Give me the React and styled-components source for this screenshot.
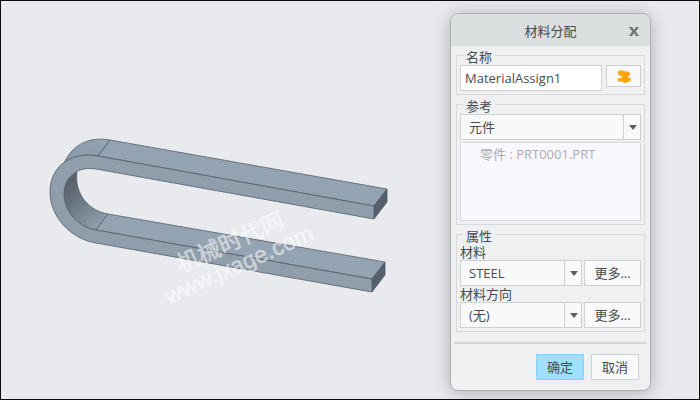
import React, { useState } from 'react';
import styled, { createGlobalStyle } from 'styled-components';

const MaterialPicker = ({ id, label, options }) => {
  return (
    <>
      <FieldLabel htmlFor={id}>{label}</FieldLabel>
      <PickerRow>
        <Dropdown id={id} options={options} />
        <Button type="button">更多...</Button>
      </PickerRow>
    </>
  );
};

const Dropdown = ({ id, label, options }) => {
  return (
    <SelectWrapper>
      <Select id={id} aria-label={label}>
        {options.map((option) => (
          <option key={option}>{option}</option>
        ))}
      </Select>
      <Arrow aria-hidden="true">
        <svg width="8" height="5" viewBox="0 0 8 5">
          <path d="M0 0H8L4 5Z" fill="#5d6063" />
        </svg>
      </Arrow>
    </SelectWrapper>
  );
};

const Model = () => {
  return (
    <ModelView viewBox="1 1 449 398" role="img" aria-label="PRT0001">
      <defs>
        <linearGradient id="bend" x1="0" y1="1" x2="1" y2="0">
          <stop offset="0" stopColor="#8295a5" />
          <stop offset="1" stopColor="#96a4b2" />
        </linearGradient>
        <linearGradient id="inside" x1="0.2" y1="0" x2="0.8" y2="1">
          <stop offset="0" stopColor="#555e68" />
          <stop offset="0.35" stopColor="#66717d" />
          <stop offset="1" stopColor="#92a2b1" />
        </linearGradient>
      </defs>
      <g stroke="#535e69" strokeWidth="0.8" strokeLinejoin="round">
        {/* inner wall of the bend */}
        <path
          d="M77 172C69 176 64 184 64 194C64 211 78 227 96 230L108 214C90 211 74 195 77 172Z"
          fill="url(#inside)"
        />
        {/* top faces */}
        <path
          d="M62 168C70 146 87 136 110 140L98 156C83 153 70 158 62 168Z"
          fill="url(#bend)"
        />
        <path d="M110 140L387 189L374 206L98 156Z" fill="#94a3b2" />
        <path d="M108 214L385 262L372 279L96 230Z" fill="#94a3b2" />
        {/* cut ends */}
        <path d="M374 206L387 189V202L374 219Z" fill="#555e6a" />
        <path d="M372 279L385 262V275L372 292Z" fill="#555e6a" />
        {/* front face */}
        <path
          d="M374 206L98 156C70 151 50 167 50 192C50 217 71 239 96 243L372 292V279L96 230C78 227 64 211 64 194C64 176 78 166 96 169L374 219Z"
          fill="#909daa"
        />
      </g>
      <Watermark>
        <text transform="translate(181 273) rotate(-24)">机械时代网</text>
        <text transform="translate(169 304) rotate(-24)">www.jxage.com</text>
      </Watermark>
    </ModelView>
  );
};

const App = () => {
  const [name, setName] = useState('MaterialAssign1');

  return (
    <>
      <GlobalStyle />
      <Page>
        <Model />
        <Dialog role="dialog" aria-labelledby="dialog-title">
          <Header>
            <h1 id="dialog-title">材料分配</h1>
            <CloseButton type="button" aria-label="关闭">
              <svg width="10" height="9" viewBox="0 0 10 9">
                <path
                  d="M0 0H3L5 3L7 0H10L6.7 4.5L10 9H7L5 6L3 9H0L3.3 4.5Z"
                  fill="#6d7173"
                />
              </svg>
            </CloseButton>
          </Header>
          <Group>
            <legend>名称</legend>
            <NameRow>
              <NameInput
                aria-label="名称"
                value={name}
                onChange={(e) => setName(e.target.value)}
              />
              <ColorButton type="button" aria-label="颜色">
                <svg width="14" height="13" viewBox="0 0 14 13">
                  <path
                    d="M1 2C2 0 5 0 7 1C9 2 12 1 13 3C14 5 12 6 10 6.5C11 7.5 14 8 14 9.5C14 11 12 11 11 12C9 13.5 7 13 6 12C4 11.5 1 12 0.5 10C0.5 7.5 4 8.5 5.5 7C5 5 1 6 1 4Z"
                    fill="#ffa40f"
                  />
                </svg>
              </ColorButton>
            </NameRow>
          </Group>
          <Group>
            <legend>参考</legend>
            <Dropdown label="参考" options={['元件', '曲面', '曲线']} />
            <ReferenceList>
              <li>零件 : PRT0001.PRT</li>
            </ReferenceList>
          </Group>
          <Group>
            <legend>属性</legend>
            <MaterialPicker id="material" label="材料" options={['STEEL']} />
            <MaterialPicker id="direction" label="材料方向" options={['(无)']} />
          </Group>
          <Divider />
          <Footer>
            <Button type="button" $primary>
              确定
            </Button>
            <Button type="button">取消</Button>
          </Footer>
        </Dialog>
      </Page>
    </>
  );
};

export default App;

const GlobalStyle = createGlobalStyle`
  * {
    box-sizing: border-box;
  }

  body {
    margin: 0;
    color: #484b4e;
    font-family: 'Open Sans', 'Noto Sans CJK SC', sans-serif;
    font-size: 13px;
  }

  button,
  input,
  select {
    color: inherit;
    font: inherit;
  }
`;

const Page = styled.main`
  display: flex;
  align-items: flex-start;
  min-height: 100vh;
  padding-right: 48px;
  border: 1px solid #0d090d;
  background: #e8eaee;
`;

const ModelView = styled.svg`
  flex: 1;
  min-width: 0;
`;

const Watermark = styled.g`
  fill: #fff;
  fill-opacity: 0.5;
  stroke: #fff;
  stroke-opacity: 0.25;
  font-family: 'Liberation Sans', 'Noto Sans CJK SC', sans-serif;
  font-size: 23px;
`;

const Dialog = styled.section`
  flex: 0 0 201px;
  margin-top: 12px;
  padding-bottom: 10px;
  border: 1px solid #adb0b2;
  border-radius: 8px;
  background: #eef0f2;
  box-shadow: 0 2px 18px rgba(0, 0, 0, 0.25);
`;

const Header = styled.header`
  display: grid;
  grid-template-columns: 1fr auto 1fr;
  align-items: center;
  height: 32px;
  padding: 2px 8px 0;
  border-radius: 7px 7px 0 0;
  background: #dadedf;

  h1 {
    grid-column: 2;
    margin: 0;
    font-size: 13px;
    font-weight: 400;
    line-height: 16px;
  }
`;

const CloseButton = styled.button`
  display: grid;
  place-items: center;
  justify-self: end;
  width: 16px;
  height: 16px;
  padding: 0;
  border: 0;
  background: none;
`;

const Group = styled.fieldset`
  min-width: 0;
  margin: 0 5px;
  padding: 1px 3px 3px;
  border: 1px solid #d7dadd;

  legend {
    margin-left: 3px;
    padding: 4px 3px 0;
    line-height: 14px;
  }
`;

const NameRow = styled.div`
  display: grid;
  grid-template-columns: 1fr 35px;
  align-items: start;
  gap: 4px;
`;

const NameInput = styled.input`
  width: 100%;
  height: 26px;
  padding: 0 4px;
  border: 1px solid #cdd1d4;
  background: #fff;
`;

const Button = styled.button`
  height: 26px;
  padding: 0;
  border: 1px solid ${(props) => (props.$primary ? '#8bd4f8' : '#cdd1d4')};
  background: ${(props) => (props.$primary ? '#a0e0ff' : '#f9f9fa')};
  line-height: 16px;
`;

const ColorButton = styled(Button)`
  display: grid;
  place-items: center;
  height: 22px;
`;

const SelectWrapper = styled.div`
  display: grid;
`;

const Select = styled.select`
  grid-area: 1 / 1;
  width: 100%;
  height: 26px;
  padding: 0 24px 0 8px;
  border: 1px solid #cdd1d4;
  border-radius: 0;
  background: #f9f9fa;
  appearance: none;
`;

const Arrow = styled.span`
  display: grid;
  grid-area: 1 / 1;
  place-items: center;
  justify-self: end;
  width: 18px;
  border-left: 1px solid #cdd1d4;
  pointer-events: none;
`;

const ReferenceList = styled.ul`
  height: 79px;
  margin: 2px 0 0;
  padding: 3px 19px;
  border: 1px solid #d7dadd;
  background: #faf8ff;
  color: #abadaf;
  line-height: 16px;
  list-style: none;
`;

const FieldLabel = styled.label`
  display: block;
  line-height: 16px;
`;

const PickerRow = styled.div`
  display: grid;
  grid-template-columns: 1fr 57px;
  gap: 2px;
`;

const Divider = styled.hr`
  height: 2px;
  margin: 10px 3px;
  border: 0;
  background: #d2d5d7;
`;

const Footer = styled.footer`
  display: grid;
  grid-template-columns: 48px 48px;
  justify-content: end;
  gap: 7px;
  padding-right: 11px;
`;
